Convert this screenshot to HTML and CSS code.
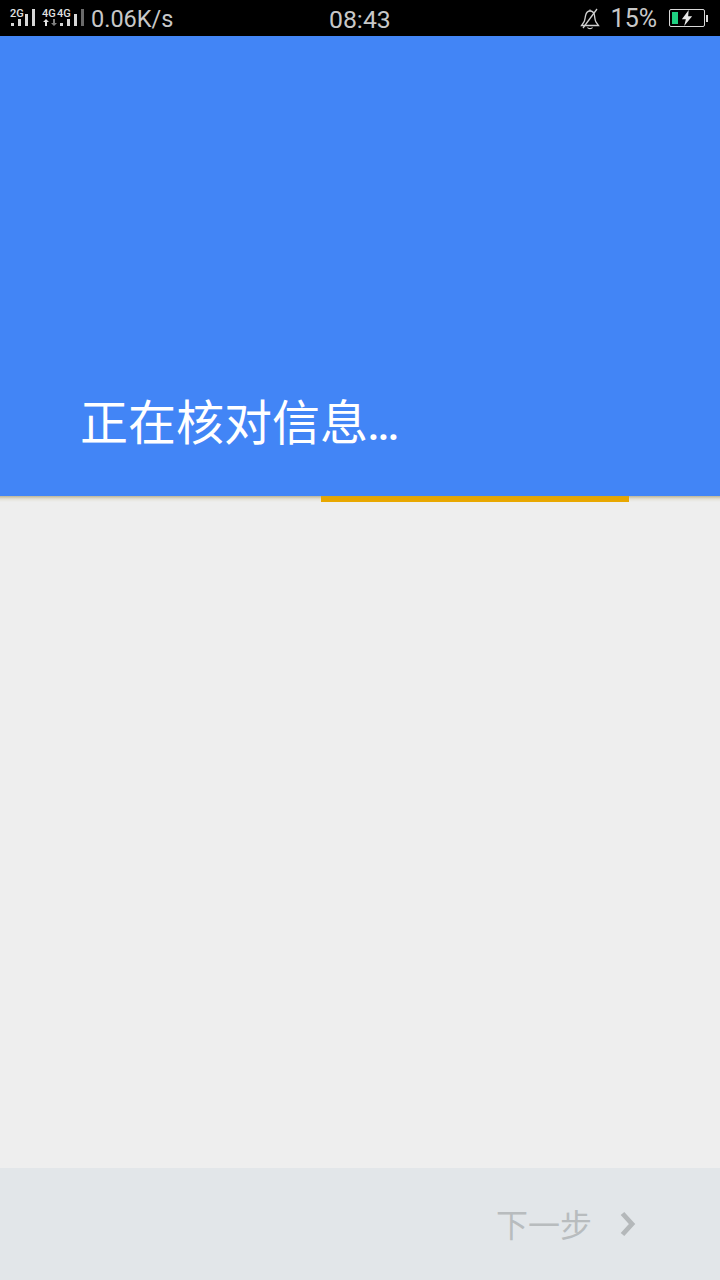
FILE: index.html
```html
<!DOCTYPE html>
<html lang="zh">
<head>
<meta charset="utf-8">
<title>正在核对信息</title>
<link rel="stylesheet" href="styles.css">
</head>
<body>
<div class="page">
  <div class="statusbar">
    <div class="status-left">
      <div class="net">
        <span class="net-label">2G</span>
        <svg class="bars" width="27" height="18" viewBox="0 0 27 18"><g fill="#d8d8d8"><rect x="1" y="14" width="3" height="3"/><rect x="8" y="10" width="3" height="7"/><rect x="15" y="5" width="3" height="12"/><rect x="22" y="0" width="3" height="17"/></g></svg>
      </div>
      <div class="net net2">
        <span class="net-label n4">4G</span><span class="net-label n5">4G</span>
        <svg class="arrows" width="16" height="7" viewBox="0 0 16 7"><path d="M4 0l3 3H5v4H3V3H1z" fill="#e4e4e4"/><path d="M12 7l3-3h-2V0h-2v4H9z" fill="#808080"/></svg>
        <svg class="bars2" width="26" height="18" viewBox="0 0 26 18"><g fill="#d8d8d8"><rect x="0" y="14" width="3" height="3"/><rect x="7" y="10" width="3" height="7"/><rect x="14" y="5" width="3" height="12"/></g><rect x="21" y="0" width="3" height="17" fill="#6a6a6a"/></svg>
      </div>
      <span class="speed">0.06K/s</span>
    </div>
    <span class="clock">08:43</span>
    <div class="status-right">
      <svg class="bell" width="20" height="22" viewBox="0 0 20 22" fill="none" stroke="#d0d0d0" stroke-width="1.3"><path d="M1.500 17.500h17l-2.600-3.500c-1-2-1-4-1.400-6.500C14 4.500 12 3 10 3S6.300 4.500 5.600 7.500C5 10 5 12 4 14z"/><path d="M7.500 19.500c1 1.500 4 1.500 5 0"/><path d="M10 3V1.500"/><path d="M3 20L17 1"/></svg>
      <span class="pct">15%</span>
      <div class="battery">
        <div class="batt-body"><div class="batt-fill"></div>
          <svg class="bolt" width="14" height="16" viewBox="0 0 12 14"><path d="M7.500 0L1.500 8h3.500L3.500 14l7-8.500H7z" fill="#e8e8e8"/></svg>
        </div>
        <div class="batt-tip"></div>
      </div>
    </div>
  </div>

  <div class="header">
    <h1 class="title">正在核对信息<span class="dots">...</span></h1>
  </div>
  <div class="progress"><div class="progress-bar"></div></div>

  <div class="content"></div>

  <div class="footer">
    <span class="next">下一步</span>
    <svg class="chev" width="18" height="26" viewBox="0 0 18 26" fill="none"><path d="M3.500 2.500L13 13 3.500 23.500" stroke="#b4b8ba" stroke-width="4.800"/></svg>
  </div>
</div>
</body>
</html>
```

FILE: styles.css
```css
* { box-sizing: border-box; }
html, body { margin: 0; padding: 0; }
body { font-family: "Roboto", "Noto Sans CJK SC", sans-serif; background: #eeeeee; }
.page { width: 720px; height: 1280px; display: flex; flex-direction: column; overflow: hidden; }

.statusbar { height: 36px; flex: none; background: #000; color: #d2d2d2; position: relative; display: flex; align-items: center; justify-content: space-between; padding: 0 12px 0 10px; }
.status-left { display: flex; align-items: center; }
.net { position: relative; height: 36px; }
.net:first-child { width: 32px; }
.net2 { width: 49px; }
.net-label { position: absolute; top: 8px; font: 500 11px/11px "Roboto", sans-serif; color: #e0e0e0; }
.net:first-child .net-label { left: 0; }
.n4 { left: 0; }
.n5 { left: 15px; }
.bars { position: absolute; left: 0; top: 9px; }
.arrows { position: absolute; left: 0; top: 19px; }
.bars2 { position: absolute; left: 18px; top: 9px; }
.speed { font-size: 23.500px; line-height: 36px; color: #c8c8c8; margin-top: 2px; }

.clock { position: absolute; left: 329px; top: 0; font-size: 24.800px; line-height: 40px; color: #c8c8c8; }
.status-right { display: flex; align-items: center; }
.bell { margin-right: 11px; margin-top: 1px; }
.pct { font-size: 25px; color: #c8c8c8; margin-right: 12px; line-height: 36px; margin-top: 2px; }
.battery { display: flex; align-items: center; }
.batt-body { width: 36px; height: 18px; border: 1px solid #d8d8d8; border-radius: 2px; padding: 2px; position: relative; }
.batt-fill { width: 6px; height: 100%; background: #1fd082; }
.bolt { position: absolute; left: 10px; top: 0; }
.batt-tip { width: 2px; height: 7px; background: #d8d8d8; margin-left: 1px; }

.header { height: 460px; flex: none; background: #4285f6; display: flex; align-items: flex-end; padding: 0 0 41px 80px; }
.title { margin: 0; font-family: "Noto Sans CJK SC", sans-serif; font-size: 48px; font-weight: 400; line-height: 56px; color: #fff; letter-spacing: 0; }
.dots { font-family: "Roboto", sans-serif; font-size: 38px; font-weight: 700; letter-spacing: -1px; }

.progress { height: 6px; flex: none; background: linear-gradient(#bdb699, #e4e2d8 50%, #eeeeee); }
.progress-bar { width: 308px; height: 6px; margin-left: 321px; background: linear-gradient(#dba60f, #e6a500 40%, #e9a800); }

.content { flex: 1; background: #eeeeee; }

.footer { height: 112px; flex: none; background: #e2e6e9; display: flex; align-items: center; justify-content: flex-end; padding: 0 83px 0 0; }
.next { font-family: "Noto Sans CJK SC", sans-serif; font-size: 32px; line-height: 40px; color: #b8bcbe; margin-right: 27px; margin-bottom: 2px; }
.chev { display: block; }
```
